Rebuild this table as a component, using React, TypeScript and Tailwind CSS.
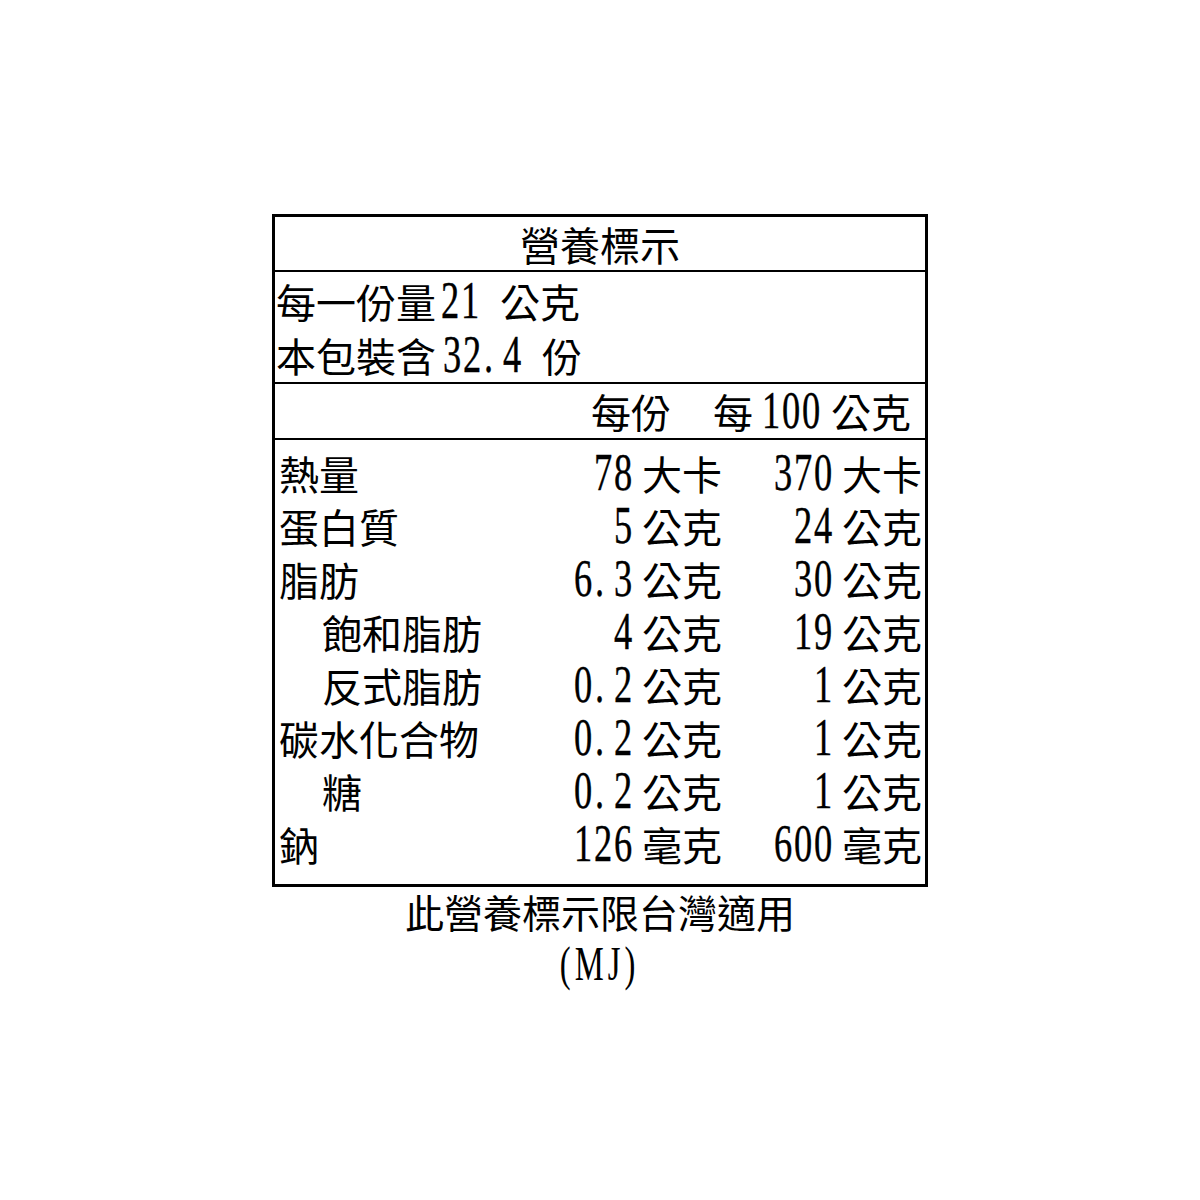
const cjk = "font-['Noto_Sans_CJK_TC','Noto_Sans_CJK_SC',sans-serif]"

const rows = [
  { label: '熱量', a: '78', au: '大卡', b: '370', bu: '大卡' },
  { label: '蛋白質', a: '5', au: '公克', b: '24', bu: '公克' },
  { label: '脂肪', a: '6.3', au: '公克', b: '30', bu: '公克' },
  { label: '飽和脂肪', indent: true, a: '4', au: '公克', b: '19', bu: '公克' },
  { label: '反式脂肪', indent: true, a: '0.2', au: '公克', b: '1', bu: '公克' },
  { label: '碳水化合物', a: '0.2', au: '公克', b: '1', bu: '公克' },
  { label: '糖', indent: true, a: '0.2', au: '公克', b: '1', bu: '公克' },
  { label: '鈉', a: '126', au: '毫克', b: '600', bu: '毫克' },
]

// half-width digits, each in a 20px cell like the printed label
function Num({ v }: { v: string }) {
  return (
    <span className="inline-flex font-['Liberation_Serif',serif] text-[52px] leading-none [-webkit-text-stroke:0.4px_#000]">
      {v.split('').map((c, i) => (
        <span
          key={i}
          className={c === '.' ? 'flex w-[20px] justify-start' : 'flex w-[20px] justify-center'}
        >
          <span className="inline-block scale-x-[0.7]">{c}</span>
        </span>
      ))}
    </span>
  )
}

function Value({ n, unit }: { n: string; unit: string }) {
  return (
    <div className="flex items-center justify-end">
      <Num v={n} />
      <span className="ml-[9px] text-[40px] leading-none">{unit}</span>
    </div>
  )
}

export default function App() {
  return (
    <div className={`flex min-h-[1200px] flex-col items-center bg-white pt-[214px] text-black ${cjk}`}>
      <div className="w-[656px] border-[3px] border-black">
        <div className="flex h-[55px] items-center justify-center border-b-2 border-black">
          <span className="text-[40px] leading-none">營養標示</span>
        </div>

        <div className="flex h-[112px] flex-col justify-center border-b-2 border-black pl-[1px] pt-[2px]">
          <div className="flex h-[55px] items-center">
            <span className="text-[40px] leading-none">每一份量</span>
            <span className="ml-[4px]"><Num v="21" /></span>
            <span className="ml-[20px] text-[40px] leading-none">公克</span>
          </div>
          <div className="flex h-[55px] items-center">
            <span className="text-[40px] leading-none">本包裝含</span>
            <span className="ml-[6px]"><Num v="32.4" /></span>
            <span className="ml-[20px] text-[40px] leading-none">份</span>
          </div>
        </div>

        <div className="flex h-[56px] items-center justify-end border-b-2 border-black pr-[14px]">
          <span className="text-[40px] leading-none">每份</span>
          <span className="ml-[42px] text-[40px] leading-none">每</span>
          <span className="ml-[8px]"><Num v="100" /></span>
          <span className="ml-[10px] text-[40px] leading-none">公克</span>
        </div>

        <div className="pb-[14px] pt-[6px]">
          {rows.map((r) => (
            <div key={r.label} className="flex h-[53px] items-center pr-[3px]">
              <div className={r.indent ? 'flex-1 pl-[47px] text-[40px] leading-none' : 'flex-1 pl-[4px] text-[40px] leading-none'}>
                {r.label}
              </div>
              <div className="w-[200px]">
                <Value n={r.a} unit={r.au} />
              </div>
              <div className="w-[200px]">
                <Value n={r.b} unit={r.bu} />
              </div>
            </div>
          ))}
        </div>
      </div>

      <p className="mt-[5px] text-center text-[39px] leading-none">此營養標示限台灣適用</p>
      <p className="mt-[9px] text-center font-['Liberation_Serif',serif] text-[48px] leading-none">
        <span className="inline-block scale-x-[0.68] tracking-[6px]">(MJ)</span>
      </p>
    </div>
  )
}
